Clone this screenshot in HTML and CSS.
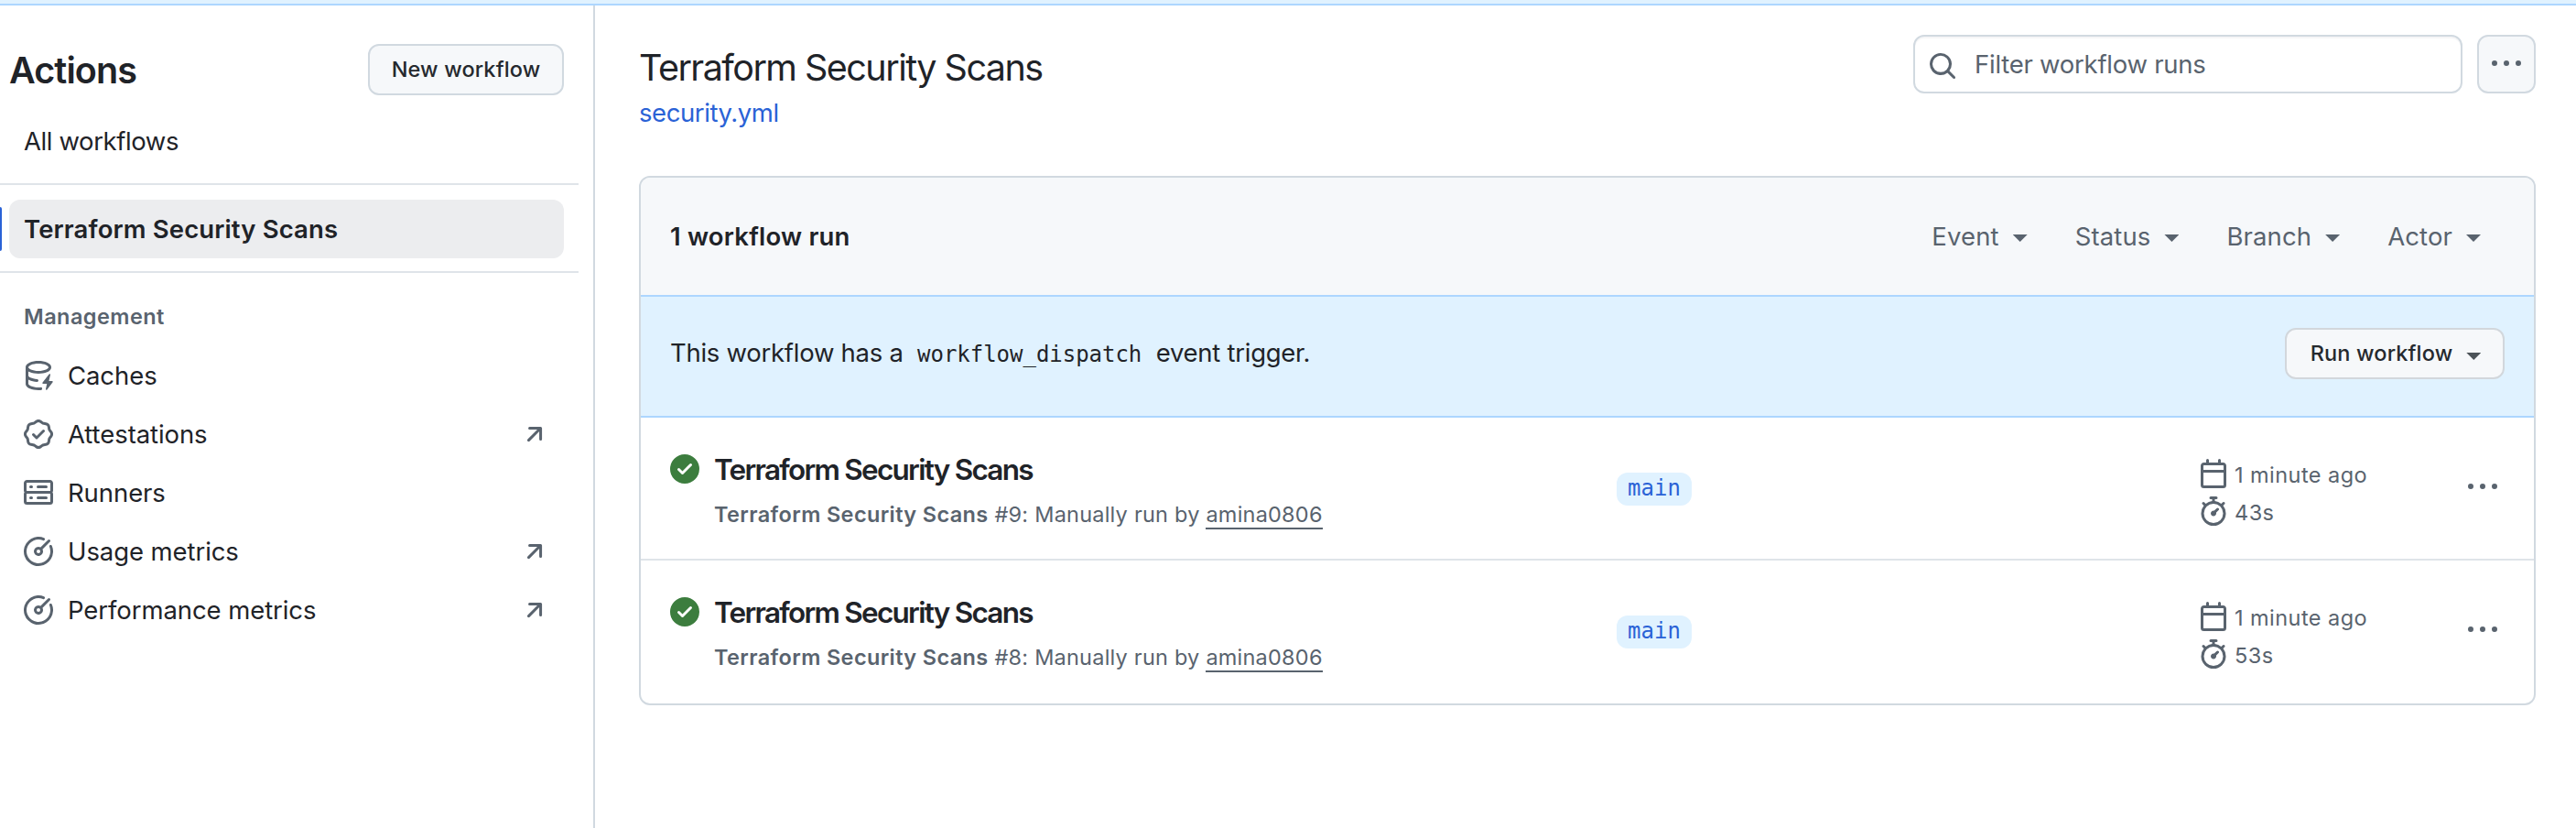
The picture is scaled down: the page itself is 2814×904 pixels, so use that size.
FILE: index.html
```html
<!DOCTYPE html>
<html lang="en">
<head>
<meta charset="utf-8">
<title>Terraform Security Scans · Workflow runs</title>
<link rel="stylesheet" href="styles.css">
</head>
<body>
<svg class="sprite" aria-hidden="true">
  <symbol id="cache" viewBox="0 0 16 16"><path d="M2.5 5.724V8c0 .248.238.7 1.169 1.159.874.43 2.144.745 3.62.822a.75.75 0 1 1-.078 1.498c-1.622-.085-3.102-.432-4.204-.975a5.565 5.565 0 0 1-.507-.28V12.5c0 .133.058.318.282.551.227.237.591.483 1.101.707 1.015.447 2.47.742 4.117.742.406 0 .802-.018 1.183-.052a.751.751 0 1 1 .134 1.494C8.89 15.98 8.45 16 8 16c-1.805 0-3.475-.32-4.721-.869-.623-.274-1.173-.619-1.579-1.041-.408-.425-.7-.964-.7-1.59v-9c0-.626.292-1.165.7-1.591.406-.42.956-.766 1.579-1.04C4.525.32 6.195 0 8 0c1.806 0 3.476.32 4.721.869.623.274 1.173.619 1.579 1.041.408.425.7.964.7 1.59 0 .626-.292 1.165-.7 1.591-.406.42-.956.766-1.578 1.04C11.475 6.68 9.805 7 8 7c-1.805 0-3.475-.32-4.721-.869a6.15 6.15 0 0 1-.779-.407Zm0-2.224c0 .133.058.318.282.551.227.237.591.483 1.101.707C4.898 5.205 6.353 5.5 8 5.5c1.646 0 3.101-.295 4.118-.742.508-.224.873-.471 1.1-.708.224-.232.282-.417.282-.55 0-.133-.058-.318-.282-.551-.227-.237-.591-.483-1.101-.707C11.102 1.795 9.647 1.5 8 1.5c-1.646 0-3.101.295-4.118.742-.508.224-.873.471-1.1.708-.224.232-.282.417-.282.55Z"/><path d="M14.49 7.582a.375.375 0 0 0-.66-.313l-3.625 4.625a.375.375 0 0 0 .295.606h2.127l-.619 2.922a.375.375 0 0 0 .666.304l3.125-4.125A.375.375 0 0 0 15.5 11h-1.778l.769-3.418Z"/></symbol>
  <symbol id="verified" viewBox="0 0 16 16"><path d="m9.585.52.929.68c.153.112.331.186.518.215l1.138.175a2.678 2.678 0 0 1 2.24 2.24l.174 1.139c.029.187.103.365.215.518l.68.928a2.677 2.677 0 0 1 0 3.17l-.68.928a1.174 1.174 0 0 0-.215.518l-.175 1.138a2.678 2.678 0 0 1-2.241 2.241l-1.138.175a1.17 1.17 0 0 0-.518.215l-.928.68a2.677 2.677 0 0 1-3.17 0l-.928-.68a1.174 1.174 0 0 0-.518-.215L3.83 14.41a2.678 2.678 0 0 1-2.24-2.24l-.175-1.138a1.17 1.17 0 0 0-.215-.518l-.68-.928a2.677 2.677 0 0 1 0-3.17l.68-.928c.112-.153.186-.331.215-.518l.175-1.14a2.678 2.678 0 0 1 2.24-2.24l1.139-.175c.187-.029.365-.103.518-.215l.928-.68a2.677 2.677 0 0 1 3.17 0ZM7.303 1.728l-.927.68a2.67 2.67 0 0 1-1.18.489l-1.137.174a1.179 1.179 0 0 0-.987.987l-.174 1.136a2.677 2.677 0 0 1-.489 1.18l-.68.928a1.18 1.18 0 0 0 0 1.394l.68.927c.256.348.424.753.489 1.18l.174 1.137c.078.509.478.909.987.987l1.136.174a2.67 2.67 0 0 1 1.18.489l.928.68c.414.305.979.305 1.394 0l.927-.68a2.67 2.67 0 0 1 1.18-.489l1.137-.174a1.18 1.18 0 0 0 .987-.987l.174-1.136a2.67 2.67 0 0 1 .489-1.18l.68-.928a1.176 1.176 0 0 0 0-1.394l-.68-.927a2.686 2.686 0 0 1-.489-1.18l-.174-1.137a1.179 1.179 0 0 0-.987-.987l-1.136-.174a2.677 2.677 0 0 1-1.18-.489l-.928-.68a1.176 1.176 0 0 0-1.394 0ZM11.28 6.78l-3.75 3.75a.75.75 0 0 1-1.06 0L4.72 8.78a.751.751 0 0 1 .018-1.042.751.751 0 0 1 1.042-.018L7 8.94l3.22-3.22a.751.751 0 0 1 1.042.018.751.751 0 0 1 .018 1.042Z"/></symbol>
  <symbol id="server" viewBox="0 0 16 16"><path d="M1.75 1h12.5c.966 0 1.75.784 1.75 1.75v4c0 .372-.116.717-.314 1 .198.283.314.628.314 1v4a1.75 1.75 0 0 1-1.75 1.75H1.75A1.75 1.75 0 0 1 0 12.75v-4c0-.358.109-.707.314-1a1.739 1.739 0 0 1-.314-1v-4C0 1.784.784 1 1.75 1ZM1.5 2.75v4c0 .138.112.25.25.25h12.5a.25.25 0 0 0 .25-.25v-4a.25.25 0 0 0-.25-.25H1.75a.25.25 0 0 0-.25.25Zm.25 5.75a.25.25 0 0 0-.25.25v4c0 .138.112.25.25.25h12.5a.25.25 0 0 0 .25-.25v-4a.25.25 0 0 0-.25-.25ZM7 4.75A.75.75 0 0 1 7.75 4h4.5a.75.75 0 0 1 0 1.5h-4.5A.75.75 0 0 1 7 4.75ZM7.75 10h4.5a.75.75 0 0 1 0 1.5h-4.5a.75.75 0 0 1 0-1.5ZM3 4.75A.75.75 0 0 1 3.75 4h.5a.75.75 0 0 1 0 1.5h-.5A.75.75 0 0 1 3 4.75ZM3.75 10h.5a.75.75 0 0 1 0 1.5h-.5a.75.75 0 0 1 0-1.5Z"/></symbol>
  <symbol id="meter" viewBox="0 0 16 16"><path d="M8 1.5a6.5 6.5 0 1 0 6.016 4.035.75.75 0 0 1 1.388-.57 8 8 0 1 1-4.37-4.37.75.75 0 0 1-.569 1.389A6.479 6.479 0 0 0 8 1.5Zm6.28.22a.75.75 0 0 1 0 1.06l-4.063 4.064a2.5 2.5 0 1 1-1.06-1.06L13.22 1.72a.75.75 0 0 1 1.06 0ZM7 8a1 1 0 1 0 2 0 1 1 0 0 0-2 0Z"/></symbol>
  <symbol id="arrow" viewBox="0 0 16 16"><path d="M4.53 4.75A.75.75 0 0 1 5.28 4h6.01a.75.75 0 0 1 .75.75v6.01a.75.75 0 0 1-1.5 0v-4.2l-5.26 5.261a.749.749 0 0 1-1.275-.326.749.749 0 0 1 .215-.734L9.48 5.5h-4.2a.75.75 0 0 1-.75-.75Z"/></symbol>
  <symbol id="search" viewBox="0 0 16 16"><path d="M10.68 11.74a6 6 0 0 1-7.922-8.982 6 6 0 0 1 8.982 7.922l3.04 3.04a.749.749 0 0 1-.326 1.275.749.749 0 0 1-.734-.215ZM11.5 7a4.499 4.499 0 1 0-8.997 0A4.499 4.499 0 0 0 11.5 7Z"/></symbol>
  <symbol id="dots" viewBox="0 0 16 16"><path d="M8 9a1.5 1.5 0 1 0 0-3 1.5 1.5 0 0 0 0 3ZM1.5 9a1.5 1.5 0 1 0 0-3 1.5 1.5 0 0 0 0 3Zm13 0a1.5 1.5 0 1 0 0-3 1.5 1.5 0 0 0 0 3Z"/></symbol>
  <symbol id="check" viewBox="0 0 16 16"><path d="M8 16A8 8 0 1 1 8 0a8 8 0 0 1 0 16Zm3.78-9.72a.751.751 0 0 0-.018-1.042.751.751 0 0 0-1.042-.018L6.75 9.19 5.28 7.72a.751.751 0 0 0-1.042.018.751.751 0 0 0-.018 1.042l2 2a.75.75 0 0 0 1.06 0Z"/></symbol>
  <symbol id="calendar" viewBox="0 0 16 16"><path d="M4.75 0a.75.75 0 0 1 .75.75V2h5V.75a.75.75 0 0 1 1.5 0V2h1.25c.966 0 1.75.784 1.75 1.75v10.5A1.75 1.75 0 0 1 13.25 16H2.75A1.75 1.75 0 0 1 1 14.25V3.75C1 2.784 1.784 2 2.75 2H4V.75A.75.75 0 0 1 4.75 0ZM2.5 7.5v6.75c0 .138.112.25.25.25h10.5a.25.25 0 0 0 .25-.25V7.5Zm10.75-4H2.75a.25.25 0 0 0-.25.25V6h11V3.75a.25.25 0 0 0-.25-.25Z"/></symbol>
  <symbol id="stopwatch" viewBox="0 0 16 16"><path d="M5.75.75A.75.75 0 0 1 6.5 0h3a.75.75 0 0 1 0 1.5h-.75v1l-.001.041a6.724 6.724 0 0 1 3.464 1.435l.007-.006.75-.75a.749.749 0 0 1 1.275.326.749.749 0 0 1-.215.734l-.75.75-.006.007a6.75 6.75 0 1 1-10.548 0L2.72 5.03l-.75-.75a.751.751 0 0 1 .018-1.042.751.751 0 0 1 1.042-.018l.75.75.007.006A6.72 6.72 0 0 1 7.25 2.541V1.5H6.5a.75.75 0 0 1-.75-.75ZM8 14.5a5.25 5.25 0 1 0-.001-10.501A5.25 5.25 0 0 0 8 14.5Zm.389-6.7 1.33-1.33a.75.75 0 1 1 1.061 1.06L9.45 8.861A1.503 1.503 0 0 1 8 10.75a1.499 1.499 0 1 1 .389-2.95Z"/></symbol>
</svg>

<div class="flash-edge"></div>
<div class="layout">
  <aside class="sidebar">
    <div class="sidebar-head">
      <h2 class="sidebar-title">Actions</h2>
      <button class="btn new-workflow">New workflow</button>
    </div>
    <a class="nav-item nav-all">All workflows</a>
    <div class="nav-divider"></div>
    <div class="nav-current">
      <a class="nav-item nav-selected">Terraform Security Scans</a>
    </div>
    <div class="nav-divider"></div>
    <h3 class="nav-heading">Management</h3>
    <nav class="nav-list">
      <a class="nav-item"><svg class="icon"><use href="#cache"/></svg><span class="nav-label">Caches</span></a>
      <a class="nav-item"><svg class="icon"><use href="#verified"/></svg><span class="nav-label">Attestations</span><svg class="icon"><use href="#arrow"/></svg></a>
      <a class="nav-item"><svg class="icon"><use href="#server"/></svg><span class="nav-label">Runners</span></a>
      <a class="nav-item"><svg class="icon"><use href="#meter"/></svg><span class="nav-label">Usage metrics</span><svg class="icon"><use href="#arrow"/></svg></a>
      <a class="nav-item"><svg class="icon"><use href="#meter"/></svg><span class="nav-label">Performance metrics</span><svg class="icon"><use href="#arrow"/></svg></a>
    </nav>
  </aside>

  <main class="main">
    <header class="page-head">
      <div class="page-titles">
        <h1 class="page-title">Terraform Security Scans</h1>
        <a class="file-link">security.yml</a>
      </div>
      <div class="page-tools">
        <label class="filter"><svg class="icon"><use href="#search"/></svg><span class="filter-text">Filter workflow runs</span></label>
        <button class="btn more"><svg class="icon"><use href="#dots"/></svg></button>
      </div>
    </header>

    <section class="box">
      <div class="box-head">
        <strong class="run-count">1 workflow run</strong>
        <div class="filters">
          <span class="filter-menu">Event<i class="caret"></i></span>
          <span class="filter-menu">Status<i class="caret"></i></span>
          <span class="filter-menu">Branch<i class="caret"></i></span>
          <span class="filter-menu">Actor<i class="caret"></i></span>
        </div>
      </div>
      <div class="dispatch">
        <p class="dispatch-text">This workflow has a <code class="code">workflow_dispatch</code> event trigger.</p>
        <button class="btn run-workflow">Run workflow<i class="caret"></i></button>
      </div>
      <div class="run">
        <svg class="icon status"><use href="#check"/></svg>
        <div class="run-info">
          <a class="run-title">Terraform Security Scans</a>
          <div class="run-sub"><b class="run-name">Terraform Security Scans</b> #9: Manually run by <a class="actor">amina0806</a></div>
        </div>
        <div class="run-branch"><a class="branch">main</a></div>
        <div class="run-meta">
          <div class="meta-line"><svg class="icon"><use href="#calendar"/></svg><span class="meta-text">1 minute ago</span></div>
          <div class="meta-line"><svg class="icon"><use href="#stopwatch"/></svg><span class="meta-text">43s</span></div>
        </div>
        <svg class="icon run-more"><use href="#dots"/></svg>
      </div>
      <div class="run">
        <svg class="icon status"><use href="#check"/></svg>
        <div class="run-info">
          <a class="run-title">Terraform Security Scans</a>
          <div class="run-sub"><b class="run-name">Terraform Security Scans</b> #8: Manually run by <a class="actor">amina0806</a></div>
        </div>
        <div class="run-branch"><a class="branch">main</a></div>
        <div class="run-meta">
          <div class="meta-line"><svg class="icon"><use href="#calendar"/></svg><span class="meta-text">1 minute ago</span></div>
          <div class="meta-line"><svg class="icon"><use href="#stopwatch"/></svg><span class="meta-text">53s</span></div>
        </div>
        <svg class="icon run-more"><use href="#dots"/></svg>
      </div>
    </section>
  </main>
</div>
</body>
</html>
```
FILE: styles.css
```css
* { box-sizing: border-box; }

body {
  margin: 0;
  height: 904px;
  display: flex;
  flex-direction: column;
  background: #fff;
  color: #1f2328;
  font: 400 27.5px/40px Inter, "Liberation Sans", sans-serif;
  overflow: hidden;
}

h1, h2, h3, p { margin: 0; }

.sprite { display: none; }

.icon {
  display: block;
  flex: none;
  width: 32px;
  height: 32px;
  fill: #59636e;
}

.btn {
  display: flex;
  align-items: center;
  justify-content: center;
  border: 2px solid #d1d9e0;
  border-radius: 12px;
  background: #f6f8fa;
  color: #25292e;
  font: 500 23.5px/40px Inter, "Liberation Sans", sans-serif;
  letter-spacing: .15px;
  white-space: nowrap;
}

.caret {
  width: 16px;
  height: 8px;
  margin-left: 15px;
  background: #59636e;
  clip-path: polygon(0 0, 100% 0, 50% 100%);
}

.flash-edge {
  flex: none;
  height: 6px;
  background: #e0f2ff;
  border-bottom: 2px solid #add6ff;
}

.layout {
  flex: 1;
  display: grid;
  grid-template-columns: 650px 1fr;
}

/* Sidebar */
.sidebar { border-right: 2px solid #d1d9e0; }

.sidebar-head {
  display: flex;
  justify-content: space-between;
  align-items: center;
  padding: 42px 32px 18px 10px;
}

.sidebar-title {
  font-size: 39.5px;
  font-weight: 600;
  line-height: 56px;
  letter-spacing: -.9px;
  padding-top: 1px;
  height: 56px;
}

.new-workflow { width: 214px; height: 56px; }

.nav-item {
  display: flex;
  align-items: center;
  gap: 16px;
  height: 64px;
  margin: 0 32px 0 10px;
  padding: 0 16px;
  border-radius: 12px;
}

.nav-list { letter-spacing: -.08px; }
.nav-all { letter-spacing: -.4px; }

.nav-divider {
  height: 2px;
  margin: 14px 16px 16px 0;
  background: #dfe4e9;
}

.nav-current {
  display: flex;
  align-items: center;
}

.nav-current::before {
  content: "";
  width: 2px;
  height: 48px;
  background: #2a62d6;
  border-radius: 0 2px 2px 0;
}

.nav-selected {
  flex: 1;
  margin-left: 8px;
  background: #ecedef;
  font-weight: 600;
  letter-spacing: .12px;
}

.nav-heading {
  height: 64px;
  padding-left: 26px;
  color: #59636e;
  font-size: 23.5px;
  font-weight: 600;
  line-height: 63px;
  letter-spacing: .45px;
}

.nav-label { flex: 1; }

/* Main column */
.main { padding: 32px 44px 0 48px; }

.page-head {
  display: flex;
  justify-content: space-between;
  height: 154px;
}

.page-titles { padding-top: 10px; }

.page-title {
  font-size: 39.5px;
  font-weight: 400;
  line-height: 52px;
  letter-spacing: -1.53px;
}

.file-link {
  display: block;
  padding-top: 3px;
  color: #2a62d6;
  letter-spacing: -.43px;
}

.page-tools {
  display: flex;
  gap: 16px;
}

.filter {
  display: flex;
  align-items: center;
  gap: 19px;
  width: 600px;
  height: 64px;
  padding: 0 14px;
  border: 2px solid #d1d9e0;
  border-radius: 12px;
  color: #59636e;
  box-shadow: inset 0 2px 0 rgba(31, 35, 40, .04);
  letter-spacing: -.25px;
}

.filter .icon { margin-top: 4px; }

.more { width: 64px; height: 64px; padding: 0; }

/* Runs box */
.box {
  height: 578px;
  border: 2px solid #d1d9e0;
  border-radius: 12px;
  overflow: hidden;
}

.box-head {
  display: flex;
  align-items: center;
  justify-content: space-between;
  height: 128px;
  padding: 0 58px 0 32px;
  background: #f6f8fa;
}

.run-count { font-weight: 600; letter-spacing: .2px; }

.filters { display: flex; gap: 52px; color: #59636e; }

.filter-menu {
  display: flex;
  align-items: center;
  letter-spacing: .12px;
}

.filter-menu .caret { margin-top: 4px; }

/* Manual trigger banner */
.dispatch {
  display: flex;
  align-items: flex-start;
  justify-content: space-between;
  height: 134px;
  padding: 34px 32px 0;
  border: solid #add6ff;
  border-width: 2px 0;
  background: #e0f2ff;
}

.dispatch-text { padding-top: 7px; letter-spacing: -.27px; white-space: nowrap; }

.code {
  padding: 0 8px;
  font: 24px/1 "DejaVu Sans Mono", "Liberation Mono", monospace;
  letter-spacing: -.03px;
}

.run-workflow { width: 240px; height: 56px; padding: 0 5px 0 7px; border-color: #d2d7dc; }
.run-workflow .caret { margin-top: 6px; background: #4c5358; }

/* Run rows */
.run {
  display: grid;
  grid-template-columns: 48px 986px 636px 1fr 32px;
  height: 154px;
  padding: 32px 40px 0 32px;
}

.run + .run { border-top: 2px solid #dfe4e9; height: 158px; }

.status { margin-top: 8px; fill: #3c7d3e; }

.run-title {
  display: block;
  font-size: 31.5px;
  font-weight: 600;
  line-height: 50px;
  letter-spacing: -1.75px;
}

.run-sub {
  padding-top: 6px;
  color: #59636e;
  font-size: 23.5px;
  line-height: 36px;
  letter-spacing: .22px;
}

.run-name { font-weight: 600; letter-spacing: .37px; }

.actor { border-bottom: 2px solid #59636e; }

.run-branch { padding-top: 28px; }

.branch {
  display: block;
  width: 82px;
  height: 36px;
  border-radius: 12px;
  background: #e0f2ff;
  color: #2a62d6;
  font: 24px/35px "DejaVu Sans Mono", "Liberation Mono", monospace;
  text-align: center;
}

.run-meta { padding-top: 8px; color: #59636e; }

.meta-line {
  display: flex;
  align-items: center;
  gap: 7px;
  height: 41px;
  font-size: 23.5px;
  letter-spacing: .45px;
}

.meta-text { padding-top: 5px; }

.run-more { margin-top: 28px; }
```
